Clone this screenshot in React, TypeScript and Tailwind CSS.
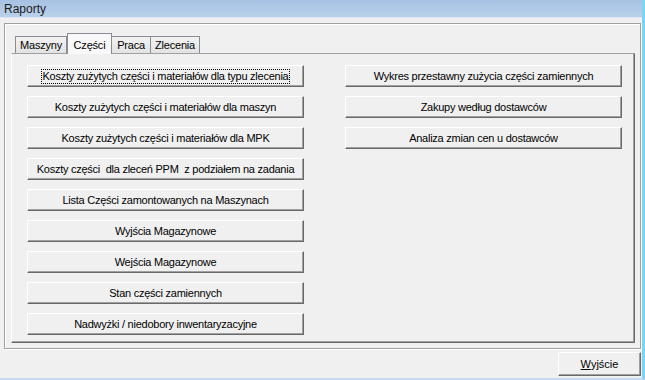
import React from 'react';

const leftButtons = [
    'Koszty zużytych części i materiałów dla typu zlecenia',
    'Koszty zużytych części i materiałów dla maszyn',
    'Koszty zużytych części i materiałów dla MPK',
    'Koszty części  dla zleceń PPM  z podziałem na zadania',
    'Lista Części zamontowanych na Maszynach',
    'Wyjścia Magazynowe',
    'Wejścia Magazynowe',
    'Stan części zamiennych',
    'Nadwyżki / niedobory inwentaryzacyjne',
];

const rightButtons = [
    'Wykres przestawny zużycia części zamiennych',
    'Zakupy według dostawców',
    'Analiza zmian cen u dostawców',
];

const tabs = [
    { label: 'Maszyny', w: 'w-[52px]' },
    { label: 'Części', w: 'w-[45px]', active: true },
    { label: 'Praca', w: 'w-[40px]' },
    { label: 'Zlecenia', w: 'w-[50px]' },
];

function WinButton({ label, focused }: { label: string; focused?: boolean }) {
    return (
        <button className="h-[22px] w-full flex items-center justify-center bg-[#f0f0f0] border-t border-l border-t-white border-l-white border-r border-b border-r-[#696969] border-b-[#696969] shadow-[inset_-1px_-1px_0_#a0a0a0] text-black whitespace-pre tracking-[-0.25px]">
            {focused ? (
                <span className="px-[1px] leading-[13px] border border-dotted border-black">{label}</span>
            ) : (
                <span>{label}</span>
            )}
        </button>
    );
}

export default function App() {
    return (
        <div
            className="w-[645px] h-[380px] flex flex-col bg-[#f0f0f0] border-r-[3px] border-r-[#7ed2f2] border-b-2 border-b-[#c4dbf0] text-[11px] text-black overflow-hidden"
            style={{ fontFamily: '"Liberation Sans", Arial, sans-serif' }}
        >
            {/* title bar */}
            <div className="h-[17px] flex items-center px-[4px] bg-gradient-to-b from-[#a7c1e2] to-[#bad1eb] text-[12px] text-[#1b1b1b]">
                Raporty
            </div>
            <div className="h-px bg-[#dbe6f2]" />

            {/* etched frame */}
            <div className="mt-[5px] ml-[4px] w-[637px] h-[326px] border border-[#a0a0a0] shadow-[inset_1px_1px_0_#fff,1px_1px_0_#fff] pl-[6px] pr-[5px] pt-[8px] pb-[5px] flex flex-col">
                <div className="flex items-end pl-[4px] h-[21px] relative z-10 tracking-[-0.2px]">
                    {tabs.map((t) =>
                        t.active ? (
                            <div
                                key={t.label}
                                className={`${t.w} h-[21px] -mb-px flex items-start justify-center pt-[3px] bg-[#f8f8f8] border-t border-l border-r border-[#898c95]`}
                            >
                                {t.label}
                            </div>
                        ) : (
                            <div
                                key={t.label}
                                className={`${t.w} h-[17px] flex items-center justify-center bg-gradient-to-b from-[#f2f2f2] to-[#e3e3e3] border-t border-l border-r border-[#898c95] -ml-px first:ml-0`}
                            >
                                {t.label}
                            </div>
                        )
                    )}
                </div>

                {/* tab page */}
                <div className="flex-1 bg-[#f0f0f0] border-t border-t-[#a0a0a0] border-l border-l-white border-r border-b border-r-[#696969] border-b-[#696969] shadow-[inset_-1px_-1px_0_#a0a0a0] pl-[15px] pt-[11px] flex gap-[41px]">
                    <div className="w-[277px] flex flex-col gap-[9px]">
                        {leftButtons.map((b, i) => (
                            <WinButton key={b} label={b} focused={i === 0} />
                        ))}
                    </div>
                    <div className="w-[277px] flex flex-col gap-[9px]">
                        {rightButtons.map((b) => (
                            <WinButton key={b} label={b} />
                        ))}
                    </div>
                </div>
            </div>

            {/* footer */}
            <div className="mt-[3px] flex justify-end pr-[1px]">
                <button className="w-[83px] h-[24px] flex items-center justify-center bg-[#f0f0f0] border-t border-l border-t-white border-l-white border-r border-b border-r-[#696969] border-b-[#696969] shadow-[inset_-1px_-1px_0_#a0a0a0]">
                    <span>
                        <span className="underline">W</span>yjście
                    </span>
                </button>
            </div>
        </div>
    );
}
